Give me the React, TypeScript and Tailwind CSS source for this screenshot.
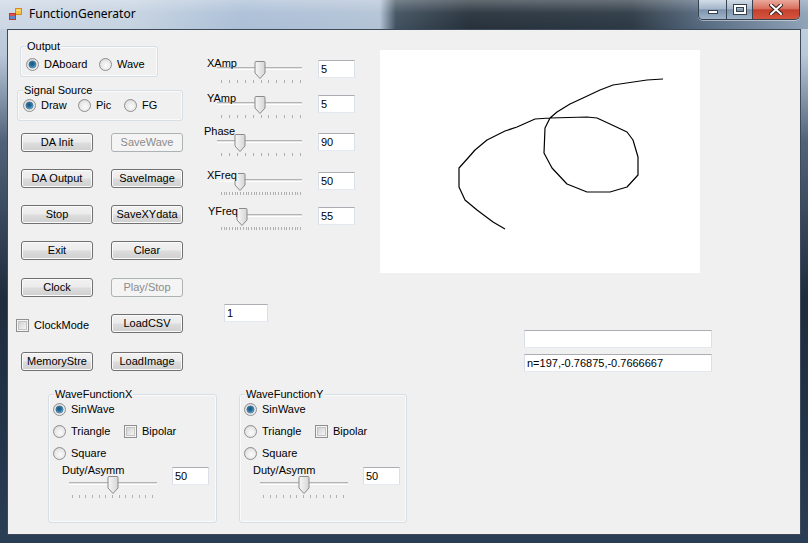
import React from 'react';

const CURVE: [number, number][] = [
    [125, 179], [113, 172], [97, 160], [85, 150], [79, 137], [79, 118], [88, 108], [95, 100], [107, 90],
    [125, 81], [137, 77], [155, 69], [170, 68], [207, 67], [217, 68], [230, 74], [247, 82], [253, 90],
    [258, 107], [258, 125], [247, 137], [230, 142], [207, 142], [187, 134], [172, 118], [164, 103],
    [165, 78], [170, 68], [177, 62], [190, 54], [203, 48], [220, 40], [233, 35], [267, 30], [283, 29],
];

function RadioDot({ checked }: { checked?: boolean }) {
    return (
        <svg width="13" height="13" viewBox="0 0 13 13" className="shrink-0 block">
            <defs>
                <radialGradient id="rbg" cx="55%" cy="60%" r="65%">
                    <stop offset="0%" stopColor="#fbfbfb" />
                    <stop offset="70%" stopColor="#e6e6e6" />
                    <stop offset="100%" stopColor="#c9c9c9" />
                </radialGradient>
                <radialGradient id="rdot" cx="45%" cy="40%" r="65%">
                    <stop offset="0%" stopColor="#1b4f73" />
                    <stop offset="55%" stopColor="#2b77a6" />
                    <stop offset="100%" stopColor="#8cc9ea" />
                </radialGradient>
            </defs>
            <circle cx="6.5" cy="6.5" r="6" fill="url(#rbg)" stroke="#8e8f8f" />
            {checked && <circle cx="6.5" cy="6.5" r="3.6" fill="url(#rdot)" stroke="#26597c" strokeWidth="0.6" />}
        </svg>
    );
}

function Radio({ label, checked, className = '' }: { label: string; checked?: boolean; className?: string }) {
    return (
        <div className={`flex items-center h-[13px] ${className}`}>
            <RadioDot checked={checked} />
            <span className="ml-[5px] leading-[13px]">{label}</span>
        </div>
    );
}

function CheckBox() {
    return (
        <svg width="13" height="13" viewBox="0 0 13 13" className="shrink-0 block">
            <defs>
                <linearGradient id="cbg" x1="0" y1="0" x2="1" y2="1">
                    <stop offset="0%" stopColor="#cfcfcf" />
                    <stop offset="100%" stopColor="#f7f7f7" />
                </linearGradient>
            </defs>
            <rect x="0.5" y="0.5" width="12" height="12" fill="#f5f5f5" stroke="#8e8f8f" />
            <rect x="2.5" y="2.5" width="8" height="8" fill="url(#cbg)" stroke="#c4c4c4" />
        </svg>
    );
}

function Btn({ label, disabled }: { label: string; disabled?: boolean }) {
    return (
        <div
            className={
                disabled
                    ? 'w-[72px] h-[19px] shrink-0 rounded-[3px] border border-[#adb2b5] bg-[#f4f4f4] text-[#8b8b8b] flex items-center justify-center leading-[13px]'
                    : 'w-[72px] h-[19px] shrink-0 rounded-[3px] border border-[#707070] bg-[linear-gradient(#f2f2f2_0%,#ebebeb_48%,#dddddd_52%,#cfcfcf_100%)] shadow-[inset_0_0_0_1px_#fbfbfb] text-black flex items-center justify-center leading-[13px]'
            }
        >
            {label}
        </div>
    );
}

function TextBox({ value = '', className = '' }: { value?: string; className?: string }) {
    return (
        <div className={`h-[18px] shrink-0 bg-white border border-t-[#abadb3] border-x-[#dbdfe6] border-b-[#e3e9ef] pl-[2px] flex items-center leading-[13px] whitespace-nowrap ${className}`}>
            {value}
        </div>
    );
}

function Trackbar({ width, height, x0, x1, trackY, thumb, ticks, t0, t1 }: {
    width: number; height: number; x0: number; x1: number; trackY: number; thumb: number; ticks: number; t0: number; t1: number;
}) {
    const cx = thumb;
    const top = trackY - 6.5;
    const d = `M${cx - 5},${top + 1} Q${cx - 5},${top} ${cx - 4},${top} H${cx + 4} Q${cx + 5},${top} ${cx + 5},${top + 1} V${trackY + 5} L${cx},${trackY + 10.5} L${cx - 5},${trackY + 5} Z`;
    const marks = Array.from({ length: ticks }, (_, i) => Math.round(t0 + ((t1 - t0) * i) / (ticks - 1)) + 0.5);
    return (
        <svg width={width} height={height} className="block shrink-0">
            <defs>
                <linearGradient id="thumbg" x1="0" y1="0" x2="1" y2="0">
                    <stop offset="0%" stopColor="#f7f7f7" />
                    <stop offset="100%" stopColor="#d6d6d6" />
                </linearGradient>
            </defs>
            <line x1={x0} x2={x1} y1={trackY - 0.5} y2={trackY - 0.5} stroke="#b3b3b3" />
            <line x1={x0} x2={x1} y1={trackY + 0.5} y2={trackY + 0.5} stroke="#e3e3e3" />
            <line x1={x0} x2={x1} y1={trackY + 1.5} y2={trackY + 1.5} stroke="#ffffff" />
            {marks.map((m, i) => (
                <line key={i} x1={m} x2={m} y1={trackY + 12} y2={trackY + 15} stroke="#b0b0b0" />
            ))}
            <path d={d} fill="url(#thumbg)" stroke="#8a8a8a" />
        </svg>
    );
}

function SliderRow({ label, value, thumb, ticks, labelLeft, labelTop, cover, className = '' }: {
    label: string; value: string; thumb: number; ticks: number; labelLeft: string; labelTop: string; cover?: boolean; className?: string;
}) {
    return (
        <div className={`flex h-[24px] ${className}`}>
            <div className="relative w-[111px] shrink-0">
                <Trackbar width={111} height={24} x0={10} x1={95} trackY={8} thumb={thumb} ticks={ticks} t0={14} t1={93} />
                <span className={`absolute leading-[12px] ${labelLeft} ${labelTop} ${cover ? 'bg-[#f0f0f0] pr-[1px]' : ''}`}>{label}</span>
            </div>
            <TextBox value={value} className="w-[37px]" />
        </div>
    );
}

function GroupBox({ label, className = '', children }: { label: string; className?: string; children: React.ReactNode }) {
    return (
        <div className={`relative shrink-0 rounded-[3px] border border-[#d5dfe5] shadow-[inset_0_0_0_1px_#fafafa] ${className}`}>
            <span className="absolute left-[5px] top-[-7px] px-px bg-[#f0f0f0] leading-[13px] whitespace-nowrap">{label}</span>
            {children}
        </div>
    );
}

function WaveGroup({ label, className = '' }: { label: string; className?: string }) {
    return (
        <GroupBox label={label} className={`h-[129px] pl-[4px] pt-[8px] flex flex-col ${className}`}>
            <Radio checked label="SinWave" />
            <div className="mt-[9px] flex items-center">
                <Radio label="Triangle" className="w-[71px]" />
                <CheckBox />
                <span className="ml-[5px] leading-[13px]">Bipolar</span>
            </div>
            <Radio label="Square" className="mt-[9px]" />
            <div className="mt-[7px] flex">
                <div className="relative w-[119px] shrink-0">
                    <Trackbar width={119} height={32} x0={16} x1={104} trackY={16} thumb={60} ticks={13} t0={19} t1={99} />
                    <span className="absolute left-[9px] top-[-3px] leading-[12px]">Duty/Asymm</span>
                </div>
                <TextBox value="50" className="w-[37px]" />
            </div>
        </GroupBox>
    );
}

function TitleIcon() {
    return (
        <svg width="13" height="13" viewBox="0 0 13 13" className="block">
            <rect x="6.5" y="0.5" width="6" height="6" fill="#f6c342" stroke="#d98a1c" />
            <rect x="7.5" y="1.5" width="4" height="1.5" fill="#fbe08a" />
            <rect x="0.5" y="5.5" width="6" height="6" fill="#5f86c6" stroke="#c0392b" />
            <rect x="1" y="6" width="5" height="2" fill="#d9534f" />
        </svg>
    );
}

export default function App() {
    return (
        <div className="w-[808px] h-[543px] overflow-hidden text-[11px] text-black font-['Liberation_Sans',Arial,sans-serif] bg-[linear-gradient(180deg,#c8d5e3_0%,#b9c8d9_10%,#50627a_26%,#1f2c3d_55%,#22344a_80%,#2a3e55_100%)]">
            {/* title bar */}
            <div className="h-[29px] flex bg-[linear-gradient(180deg,rgba(255,255,255,0.28)_0%,rgba(255,255,255,0.05)_45%,rgba(0,0,0,0)_100%),linear-gradient(90deg,#cdd8e5_0%,#c6d3e1_16%,#abbfd7_30%,#b3c3d6_47%,#40505f_49%,#26313b_58%,#2c3843_78%,#55697f_87%,#8ea2b8_100%)]">
                <div className="ml-[9px] mt-[8px]">
                    <TitleIcon />
                </div>
                <span className="ml-[7px] mt-[6px] text-[12px] leading-[16px] font-['Noto_Sans',sans-serif] text-black">FunctionGenerator</span>
                <div className="ml-auto mr-[8px] self-start flex h-[20px] rounded-b-[5px] border border-t-0 border-[#39434f] overflow-hidden shadow-[0_1px_0_rgba(255,255,255,0.45)]">
                    <div className="w-[28px] flex items-end justify-center pb-[5px] border-r border-[#39434f] bg-[linear-gradient(180deg,#d2dde8_0%,#a6b8cb_45%,#7d94ad_52%,#9fb4c9_100%)]">
                        <div className="w-[10px] h-[4px] bg-white border border-[#34404d]" />
                    </div>
                    <div className="w-[26px] flex items-center justify-center border-r border-[#39434f] bg-[linear-gradient(180deg,#d2dde8_0%,#a6b8cb_45%,#7d94ad_52%,#9fb4c9_100%)]">
                        <div className="w-[12px] h-[9px] border-[2px] border-white outline outline-1 outline-[#34404d] shadow-[inset_0_0_0_1px_#34404d]" />
                    </div>
                    <div className="w-[46px] flex items-center justify-center bg-[linear-gradient(180deg,#e9a99c_0%,#d9705f_45%,#c4402e_52%,#d5553d_100%)]">
                        <svg width="14" height="11" viewBox="0 0 14 11">
                            <path d="M2,1 L12,10 M12,1 L2,10" stroke="#3a2320" strokeWidth="4" strokeLinecap="square" />
                            <path d="M2,1 L12,10 M12,1 L2,10" stroke="#ffffff" strokeWidth="2" strokeLinecap="square" />
                        </svg>
                    </div>
                </div>
            </div>

            {/* client area */}
            <div className="ml-[7px] w-[794px] h-[506px] border border-[#3d4a59] bg-[#f0f0f0] flex flex-col">
                <div className="h-[364px] flex shrink-0">
                    {/* left column */}
                    <div className="w-[199px] shrink-0 flex flex-col">
                        <GroupBox label="Output" className="ml-[12px] mt-[16px] w-[138px] h-[31px] pl-[5px] pt-[11px] flex">
                            <Radio checked label="DAboard" className="w-[73px]" />
                            <Radio label="Wave" />
                        </GroupBox>
                        <GroupBox label="Signal Source" className="ml-[9px] mt-[13px] w-[166px] h-[31px] pl-[5px] pt-[8px] flex">
                            <Radio checked label="Draw" className="w-[55px]" />
                            <Radio label="Pic" className="w-[46px]" />
                            <Radio label="FG" />
                        </GroupBox>
                        <div className="mt-[12px] pl-[13px] flex gap-[18px]">
                            <Btn label="DA Init" />
                            <Btn label="SaveWave" disabled />
                        </div>
                        <div className="mt-[17px] pl-[13px] flex gap-[18px]">
                            <Btn label="DA Output" />
                            <Btn label="SaveImage" />
                        </div>
                        <div className="mt-[17px] pl-[13px] flex gap-[18px]">
                            <Btn label="Stop" />
                            <Btn label="SaveXYdata" />
                        </div>
                        <div className="mt-[17px] pl-[13px] flex gap-[18px]">
                            <Btn label="Exit" />
                            <Btn label="Clear" />
                        </div>
                        <div className="mt-[18px] pl-[13px] flex gap-[18px]">
                            <Btn label="Clock" />
                            <Btn label="Play/Stop" disabled />
                        </div>
                        <div className="mt-[17px] flex items-center">
                            <div className="w-[103px] shrink-0 flex items-center pl-[8px] pt-[3px]">
                                <CheckBox />
                                <span className="ml-[5px] leading-[13px]">ClockMode</span>
                            </div>
                            <Btn label="LoadCSV" />
                        </div>
                        <div className="mt-[19px] pl-[13px] flex gap-[18px]">
                            <Btn label="MemoryStre" />
                            <Btn label="LoadImage" />
                        </div>
                    </div>

                    {/* middle column: sliders */}
                    <div className="w-[173px] shrink-0 flex flex-col">
                        <SliderRow className="mt-[30px]" label="XAmp" value="5" thumb={53} ticks={11} labelLeft="left-0" labelTop="top-[-3px]" />
                        <SliderRow className="mt-[11px]" label="YAmp" value="5" thumb={53} ticks={11} labelLeft="left-0" labelTop="top-[-3px]" />
                        <SliderRow className="mt-[14px]" label="Phase" value="90" thumb={33} ticks={11} labelLeft="left-[-3px]" labelTop="top-[-8px]" />
                        <SliderRow className="mt-[15px]" label="XFreq" value="50" thumb={33} ticks={30} labelLeft="left-0" labelTop="top-[-3px]" cover />
                        <SliderRow className="mt-[11px]" label="YFreq" value="55" thumb={35} ticks={30} labelLeft="left-px" labelTop="top-[-2px]" cover />
                        <TextBox value="1" className="ml-[17px] mt-[73px] w-[44px]" />
                    </div>

                    {/* right column: drawing area + status boxes */}
                    <div className="flex-1 flex flex-col">
                        <div className="mt-[20px] w-[320px] h-[223px] bg-white shrink-0">
                            <svg width="320" height="223" className="block">
                                <polyline
                                    points={CURVE.map(([x, y]) => `${x},${y}`).join(' ')}
                                    fill="none"
                                    stroke="#000000"
                                    strokeWidth="1.2"
                                    strokeLinejoin="round"
                                />
                            </svg>
                        </div>
                        <TextBox className="ml-[144px] mt-[57px] w-[188px]" />
                        <TextBox value="n=197,-0.76875,-0.7666667" className="ml-[144px] mt-[6px] w-[188px]" />
                    </div>
                </div>

                {/* wave function groups */}
                <div className="flex pl-[40px]">
                    <WaveGroup label="WaveFunctionX" className="w-[169px]" />
                    <WaveGroup label="WaveFunctionY" className="ml-[22px] w-[168px]" />
                </div>
            </div>
        </div>
    );
}
